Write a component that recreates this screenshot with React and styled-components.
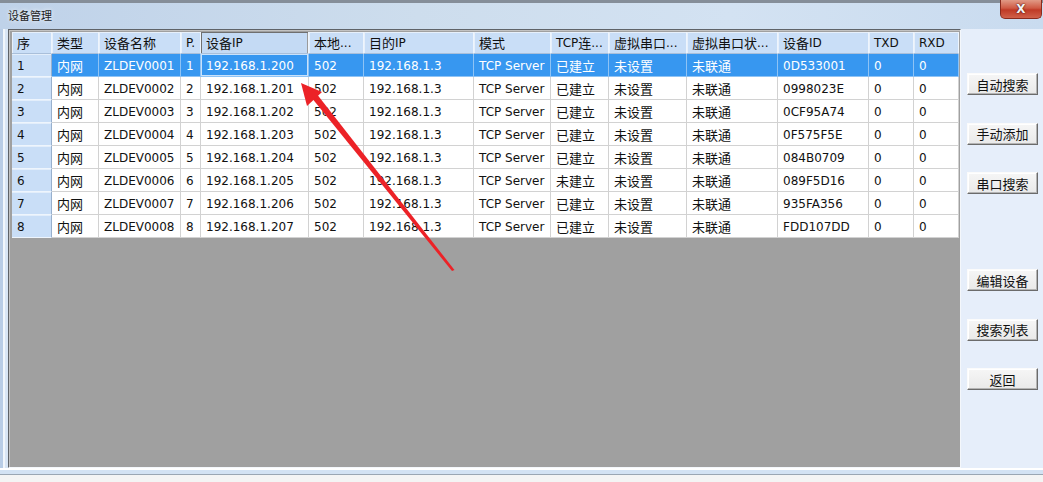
import React from "react";
import styled, { createGlobalStyle } from "styled-components";

const GlobalStyle = createGlobalStyle`
  html, body {
    margin: 0;
    padding: 0;
    background: #f3f3f3;
  }
  body {
    font-family: "DejaVu Sans", "Noto Sans CJK SC", sans-serif;
  }
`;

const COLS = [40, 47, 82, 20, 108, 55, 110, 77, 58, 78, 91, 91, 45, 45];

const HEADERS = [
  "序",
  "类型",
  "设备名称",
  "P.",
  "设备IP",
  "本地...",
  "目的IP",
  "模式",
  "TCP连...",
  "虚拟串口...",
  "虚拟串口状...",
  "设备ID",
  "TXD",
  "RXD",
];

const IDS = [
  "0D533001",
  "0998023E",
  "0CF95A74",
  "0F575F5E",
  "084B0709",
  "089F5D16",
  "935FA356",
  "FDD107DD",
];

const DEVICES = IDS.map((id, i) => [
  String(i + 1),
  "内网",
  `ZLDEV000${i + 1}`,
  String(i + 1),
  `192.168.1.${200 + i}`,
  "502",
  "192.168.1.3",
  "TCP Server",
  i === 5 ? "未建立" : "已建立",
  "未设置",
  "未联通",
  id,
  "0",
  "0",
]);

const BUTTONS = ["自动搜索", "手动添加", "串口搜索", null, "编辑设备", "搜索列表", "返回"];

const Window = styled.div`
  position: relative;
  width: 1043px;
  height: 482px;
  overflow: hidden;
  display: flex;
  flex-direction: column;
  background: #f3f3f3;
`;

const TitleBar = styled.div`
  height: 29px;
  flex: none;
  display: flex;
  align-items: flex-start;
  box-sizing: border-box;
  border-top: 3px solid #858e99;
  background: linear-gradient(to right, #bfd2e9, #cddded 40%, #d3e2f2 70%, #c9dbef);
`;

const Title = styled.div`
  padding: 5px 0 0 8px;
  font-family: "Noto Sans CJK SC", sans-serif;
  font-size: 11px;
  line-height: 14px;
  color: #1b1b1b;
  text-shadow: 0 0 4px #fff;
`;

const CloseButton = styled.div`
  margin-left: auto;
  margin-right: 1px;
  margin-top: -3px;
  width: 42px;
  height: 19px;
  box-sizing: border-box;
  border: 1px solid #8a2b1e;
  border-top: none;
  border-radius: 0 0 5px 5px;
  background: linear-gradient(#e19a86, #cf5a44 45%, #bf3a26 55%, #d0614a);
  display: flex;
  align-items: center;
  justify-content: center;
  color: #f4f4f4;
  font-family: "DejaVu Sans", sans-serif;
  font-weight: bold;
  font-size: 12px;
  text-shadow: 0 0 2px #5a1208, 0 0 1px #5a1208;
`;

const Body = styled.div`
  flex: 1;
  display: flex;
  min-height: 0;
`;

const LeftFrame = styled.div`
  width: 8px;
  flex: none;
  background: linear-gradient(to right, #b9cde6 0 3px, #f2f7fc 3px 5px, #d9e6f5 5px);
`;

const GridBox = styled.div`
  width: 953px;
  flex: none;
  box-sizing: border-box;
  border-left: 1px solid #5f6368;
  border-top: 1px solid #5f6368;
  border-right: 1px solid #f4f7fb;
  border-bottom: 1px solid #f4f7fb;
  box-shadow: inset 1px 1px 0 #c2c2c2;
  background: #a0a0a0;
  padding: 2px 0 0 3px;
`;

const Row = styled.div`
  display: grid;
  grid-template-columns: ${COLS.map((w) => `${w}px`).join(" ")};
  height: ${(p) => (p.$head ? 22 : 23)}px;
`;

const Cell = styled.div`
  box-sizing: border-box;
  display: flex;
  align-items: center;
  padding: 2px 0 0 5px;
  overflow: hidden;
  white-space: nowrap;
  font-size: 12px;
  line-height: 16px;
  color: ${(p) => (p.$selected ? "#ffffff" : "#111111")};
  background: ${(p) => (p.$selected ? "#3797f0" : "#ffffff")};
  border-right: 1px solid ${(p) => (p.$selected ? "#8ec3f5" : "#d2d2d2")};
  border-bottom: 1px solid ${(p) => (p.$selected ? "#8ec3f5" : "#d2d2d2")};
  box-shadow: ${(p) => (p.$focus ? "inset 0 0 0 1px #c9e2fb" : "none")};
`;

const HeadCell = styled(Cell)`
  padding-top: 1px;
  background: ${(p) => (p.$sorted ? "#c4daf4" : "#c9def7")};
  color: #111111;
  border-right: 1px solid #eef5fd;
  border-bottom: 1px solid #a9bfda;
  box-shadow: ${(p) =>
    p.$sorted ? "inset 1px 1px 0 #6f6f6f, inset -1px 0 0 #9a9a9a" : "inset 1px 1px 0 #e7f0fb"};
`;

const RowHead = styled(Cell)`
  background: #c9def7;
  color: #111111;
  border-right: 1px solid #98b0cd;
  border-bottom: 1px solid #eef5fd;
  box-shadow: inset 0 1px 0 #e3eefb;
`;

const Han = styled.span`
  font-family: "Noto Sans CJK SC", sans-serif;
  font-size: 13px;
`;

const RightPanel = styled.div`
  flex: 1;
  background: #e6eefa;
  display: flex;
  flex-direction: column;
  align-items: flex-start;
  gap: 27.5px;
  padding: 44px 0 0 6px;
`;

const Spacer = styled.div`
  height: 20px;
`;

const Button = styled.div`
  width: 71px;
  height: 22px;
  box-sizing: border-box;
  display: flex;
  align-items: center;
  justify-content: center;
  font-family: "Noto Sans CJK SC", sans-serif;
  font-size: 13px;
  color: #111;
  background: linear-gradient(#f6f6f6, #e9e9e9);
  border: 1px solid;
  border-color: #fbfbfb #6b6b6b #6b6b6b #fbfbfb;
  box-shadow: inset -1px -1px 0 #b4b4b4, inset 1px 1px 0 #ffffff;
`;

const BottomFrame = styled.div`
  height: 14px;
  flex: none;
  background: linear-gradient(
    #ffffff 0 2px,
    #d3e2f3 2px 6px,
    #9aa6b3 6px 7px,
    #f4f4f4 7px
  );
`;

const Arrow = styled.svg`
  position: absolute;
  left: 0;
  top: 0;
  pointer-events: none;
`;

const mix = (text) =>
  text
    .split(/([\u4e00-\u9fff]+)/)
    .filter(Boolean)
    .map((part, i) =>
      /[\u4e00-\u9fff]/.test(part) ? <Han key={i}>{part}</Han> : <span key={i}>{part}</span>
    );

export default function App() {
  return (
    <>
      <GlobalStyle />
      <Window>
        <TitleBar>
          <Title>设备管理</Title>
          <CloseButton>X</CloseButton>
        </TitleBar>
        <Body>
          <LeftFrame />
          <GridBox>
            <Row $head>
              {HEADERS.map((h, i) => (
                <HeadCell key={h} $sorted={i === 4}>
                  {mix(h)}
                </HeadCell>
              ))}
            </Row>
            {DEVICES.map((row, r) => (
              <Row key={r}>
                {row.map((v, c) =>
                  c === 0 ? (
                    <RowHead key={c}>{v}</RowHead>
                  ) : (
                    <Cell key={c} $selected={r === 0} $focus={r === 0 && c === 4}>
                      {mix(v)}
                    </Cell>
                  )
                )}
              </Row>
            ))}
          </GridBox>
          <RightPanel>
            {BUTTONS.map((b, i) => (b ? <Button key={b}>{b}</Button> : <Spacer key={i} />))}
          </RightPanel>
        </Body>
        <BottomFrame />
        <Arrow width="1043" height="482" viewBox="0 0 1043 482">
          <polygon points="454.5,270 452,271 311,97 316,93" fill="#ec2227" />
          <polygon points="301,83 322,92 307,106" fill="#ec2227" />
        </Arrow>
      </Window>
    </>
  );
}
